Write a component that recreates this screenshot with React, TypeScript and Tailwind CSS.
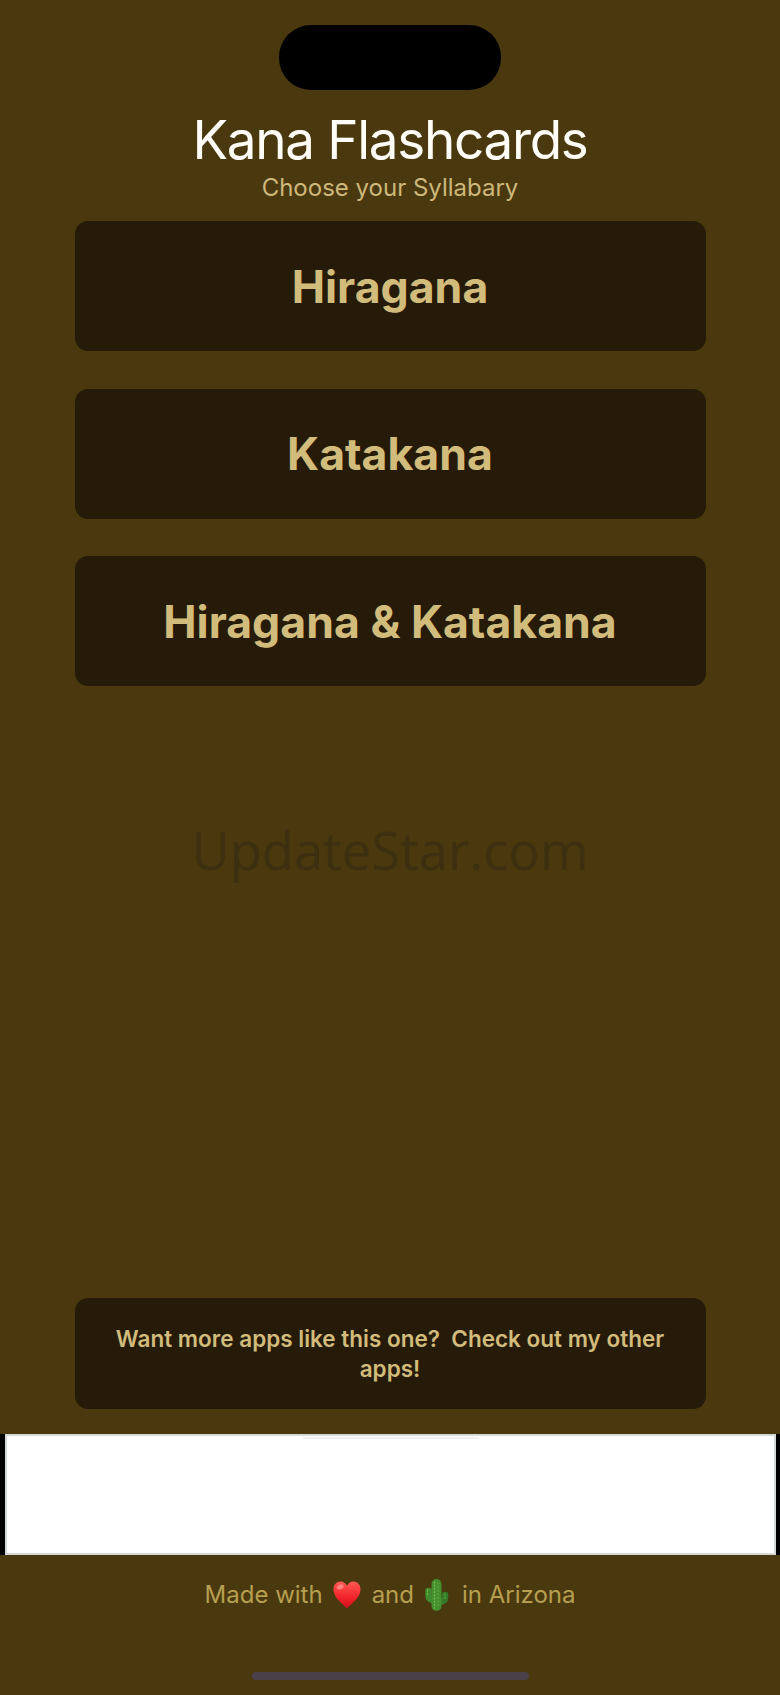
import React from 'react';

const choices = ['Hiragana', 'Katakana', 'Hiragana & Katakana'];

function HeartEmoji() {
  return (
    <svg width="28" height="28" viewBox="0 0 29 28" preserveAspectRatio="none" className="shrink-0">
      <defs>
        <linearGradient id="heart" x1="0" y1="0" x2="0" y2="1">
          <stop offset="0" stopColor="#ff5a55" />
          <stop offset="0.6" stopColor="#f2222a" />
          <stop offset="1" stopColor="#c9101c" />
        </linearGradient>
      </defs>
      <path
        d="M14.5 27.5C12.5 25 1 17.5 0.5 9C0.2 4 3.6 0.5 7.8 0.5C10.8 0.5 13.2 2.2 14.5 4.8C15.8 2.2 18.2 0.5 21.2 0.5C25.4 0.5 28.8 4 28.5 9C28 17.5 16.5 25 14.5 27.5Z"
        fill="url(#heart)"
      />
      <ellipse cx="7.5" cy="6" rx="3.6" ry="2.2" fill="#ff9c96" opacity="0.7" transform="rotate(-25 7.5 6)" />
    </svg>
  );
}

function CactusEmoji() {
  return (
    <svg width="25" height="32" viewBox="0 0 24 32" fill="none" strokeLinecap="round" className="shrink-0">
      <path d="M4 12V16Q4 21 10 21" stroke="#3f8a2c" strokeWidth="6.5" />
      <path d="M20.5 16V18Q20.5 23 14 23" stroke="#347a28" strokeWidth="6.5" />
      <path d="M12 5V27" stroke="#44902f" strokeWidth="10" />
      <path d="M10 3V29" stroke="#7dbb4a" strokeWidth="1.3" strokeDasharray="1 2.2" />
      <path d="M13.5 4V28" stroke="#69aa3e" strokeWidth="1.2" strokeDasharray="1 2.6" />
      <path d="M3 11V17" stroke="#7dbb4a" strokeWidth="1.2" strokeDasharray="1 2.4" />
      <path d="M20.5 15V20" stroke="#69aa3e" strokeWidth="1.2" strokeDasharray="1 2.4" />
    </svg>
  );
}

export default function App() {
  return (
    <div className="h-[1695px] w-[780px] overflow-hidden bg-[#4a390e] flex flex-col items-center font-['Inter',sans-serif]">
      <div className="mt-[25px] h-[65px] w-[222px] shrink-0 rounded-[32px] bg-black" />

      <h1 className="mt-[18px] text-[53px] leading-[64px] tracking-[-1.3px] font-normal text-[#fffdf7]">Kana Flashcards</h1>
      <p className="mt-[1px] text-[24px] leading-[30px] text-[#cdb77a]">Choose your Syllabary</p>

      <div className="mt-[18px] w-[631px] flex flex-col gap-[37.5px]">
        {choices.map((label) => (
          <button
            key={label}
            className="h-[130px] rounded-[13px] bg-[#261b08] pt-[2px] text-[44.6px] font-bold text-[#d2bc7c]"
          >
            {label}
          </button>
        ))}
      </div>

      <p className="mt-[129px] font-['Open_Sans',sans-serif] text-[52.5px] leading-[70px] text-[#3d3010]">UpdateStar.com</p>

      <div className="flex-1" />

      <button className="h-[111px] w-[631px] rounded-[13px] bg-[#261b08] px-[38px] text-[22.5px] leading-[30px] font-semibold text-[#d2bc7c] whitespace-pre-wrap">
        {'Want more apps like this one?  Check out my other apps!'}
      </button>

      <div className="mt-[25px] h-[121px] w-full bg-black px-[4.5px]">
        <div className="relative h-full border-2 border-[#d5d9d6] bg-white">
          <div className="absolute top-[1px] left-[296px] h-[2px] w-[176px] bg-[#f0f1f4]" />
        </div>
      </div>

      <div className="mt-[22px] h-[36px] flex items-center gap-[10.5px] text-[24px] text-[#b79f50]">
        <span>Made with</span>
        <HeartEmoji />
        <span>and</span>
        <CactusEmoji />
        <span className="ml-[2px]">in Arizona</span>
      </div>

      <div className="mt-[59px] mb-[15px] h-[8px] w-[277px] rounded-[4px] bg-[#4a4048]" />
    </div>
  );
}
